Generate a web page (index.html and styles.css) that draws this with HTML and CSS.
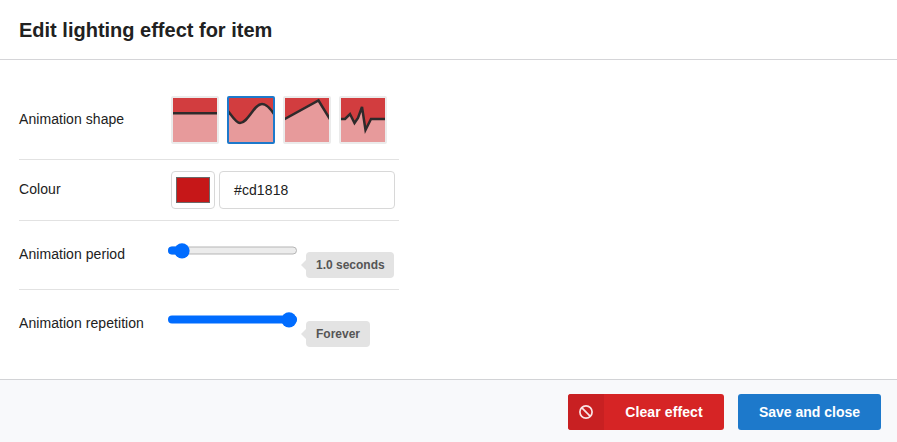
FILE: index.html
```html
<!DOCTYPE html>
<html lang="en">
<head>
<meta charset="utf-8">
<title>Edit lighting effect for item</title>
<link rel="stylesheet" href="styles.css">
</head>
<body>
<header class="header"><h1 class="title"><span>Edit lighting effect for item</span></h1></header>
<main class="form">
  <div class="row row-shape">
    <div class="label"><span>Animation shape</span></div>
    <div class="shapes">
      <div class="shape"><svg viewBox="0 0 44 44"><rect class="fill" y="15" width="44" height="29"/><path class="line" d="M-2 15.3H46"/></svg></div>
      <div class="shape selected"><svg viewBox="0 0 44 44"><path class="fill" d="M0 14C3 18 7 25 11 25C19 25 25 6 33 6C37 6 41 10 44 15V44H0Z"/><path class="line" d="M-1 13C3 18 7 25 11 25C19 25 25 6 33 6C37 6 41 10 45 16"/></svg></div>
      <div class="shape"><svg viewBox="0 0 44 44"><path class="fill" d="M0 21L33.5 2.5L44 20V44H0Z"/><path class="line" d="M-2 22L33.5 2.5L46 23"/></svg></div>
      <div class="shape"><svg viewBox="0 0 44 44"><path class="fill" d="M0 21H4L9 16L13.5 25L17 20L21 9L24.5 32L30 21H44V44H0Z"/><path class="line" d="M-2 21H4L9 16L13.5 25L17 20L21 9L24.5 32L30 21H46"/></svg></div>
    </div>
  </div>
  <div class="row row-colour">
    <div class="label"><span>Colour</span></div>
    <div class="colour"><div class="picker"><div class="swatch"></div></div><div class="field"><span>#cd1818</span></div></div>
  </div>
  <div class="row row-period">
    <div class="label"><span>Animation period</span></div>
    <div class="range">
      <svg class="slider" viewBox="0 0 130 16"><rect class="track" x=".5" y="4" width="128" height="7" rx="3.5"/><path class="progress" d="M4 3.6H14V11.6H4A4 4 0 0 1 4 3.6Z"/><circle class="thumb" cx="14" cy="7.8" r="7.6"/></svg>
      <div class="value value-period"><span>1.0 seconds</span></div>
    </div>
  </div>
  <div class="row row-repeat">
    <div class="label"><span>Animation repetition</span></div>
    <div class="range">
      <svg class="slider" viewBox="0 0 130 16"><rect class="progress" y="3.5" width="129" height="8" rx="4"/><circle class="thumb" cx="121" cy="7.8" r="7.6"/></svg>
      <div class="value value-repeat"><span>Forever</span></div>
    </div>
  </div>
</main>
<footer class="footer">
  <div class="button clear">
    <div class="icon"><svg viewBox="0 0 16 16"><circle cx="8" cy="8" r="6.1"/><path d="M3.7 3.7L12.3 12.3"/></svg></div>
    <div class="text"><span>Clear effect</span></div>
  </div>
  <div class="button save"><span>Save and close</span></div>
</footer>
</body>
</html>
```
FILE: styles.css
```css
* { box-sizing: border-box; }
body {
  margin: 0;
  height: 442px;
  display: flex;
  flex-direction: column;
  background: #fff;
  color: #212121;
  font: 14px/20px "Liberation Sans", Arial, sans-serif;
  overflow: hidden;
}
svg { display: block; }
.header { height: 60px; padding: 18px 19px; border-bottom: 1px solid #d5d5d8; }
.title { margin: 0; font-size: 20px; line-height: 24px; font-weight: 700; white-space: nowrap; }
.form { height: 319px; padding-left: 19px; }
.row { display: flex; width: 380px; border-bottom: 1px solid #e2e2e2; }
.row-shape { height: 100px; padding-top: 36px; }
.row-colour { height: 61px; padding-top: 11px; }
.row-period { height: 69px; padding-top: 22px; }
.row-repeat { height: 89px; padding-top: 22px; border-bottom: 0; }
.label { width: 152px; letter-spacing: .06px; white-space: nowrap; }
.row-shape .label { padding-top: 13px; }
.row-colour .label { padding-top: 8px; }
.row-period .label, .row-repeat .label { width: 149px; padding-top: 1px; }
.shapes { display: flex; gap: 8px; }
.shape { width: 48px; height: 48px; border: 2px solid #ebebeb; border-radius: 2px; background: #d23d3f; }
.shape svg { width: 44px; height: 44px; }
.selected { border-color: #1d79cb; }
.fill { fill: #e79a9b; }
.line { fill: none; stroke: #2e2a2b; stroke-width: 2.5; }
.colour { display: flex; gap: 4px; }
.picker { width: 44px; height: 38px; padding: 5px 4px; border: 1px solid #d8d8d8; border-radius: 4px; }
.swatch { width: 34px; height: 26px; border: 1px solid #6c6869; background: #c61718; }
.field { width: 176px; height: 38px; padding: 8px 14px; border: 1px solid #d8d8d8; border-radius: 4px; letter-spacing: .1px; }
.range { display: flex; gap: 8px; }
.slider { width: 130px; height: 16px; }
.track { fill: #ececec; stroke: #b5b5b5; }
.progress, .thumb { fill: #006cff; }
.value { position: relative; height: 26px; margin-top: 9px; padding: 0 10px; border-radius: 4px; background: #e3e3e3; color: #555; font-size: 12px; line-height: 26px; font-weight: 700; white-space: nowrap; }
.value::before { content: ""; position: absolute; left: -5px; top: 8px; border: solid transparent; border-width: 5px 5px 5px 0; border-right-color: #e3e3e3; }
.value-period { width: 88px; }
.value-repeat { width: 64px; }
.footer { height: 63px; display: flex; justify-content: flex-end; gap: 14px; padding: 14px 16px 0; border-top: 1px solid #d2d3d6; background: #f8f9fb; }
.button { display: flex; height: 36px; border-radius: 3px; overflow: hidden; color: #fff; font-weight: 700; line-height: 36px; white-space: nowrap; }
.clear { width: 156px; background: #d62425; }
.icon { display: flex; align-items: center; justify-content: center; width: 36px; background: #c82022; }
.icon svg { width: 16px; height: 16px; fill: none; stroke: #fae5e6; stroke-width: 1.7; }
.text { flex: 1; letter-spacing: .1px; text-align: center; }
.save { width: 143px; justify-content: center; background: #1d79cb; }
```
